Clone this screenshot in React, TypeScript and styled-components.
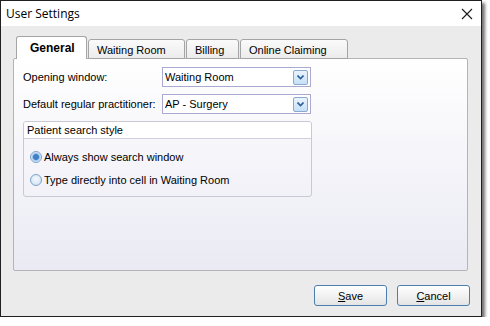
import { FC } from "react";
import styled, { createGlobalStyle } from "styled-components";

const GlobalStyle = createGlobalStyle`
  html, body {
    margin: 0;
    padding: 0;
    background: #ffffff;
  }
  body {
    font-family: Tahoma, "Liberation Sans", Arial, sans-serif;
    font-size: 11px;
    color: #000;
  }
`;

const TABS = ["General", "Waiting Room", "Billing", "Online Claiming"];
const TAB_WIDTHS = [71, 97, 53, 108];

const Chevron: FC = () => (
  <svg width="7" height="5" viewBox="0 0 7 5">
    <path d="M0.5 0.5 L3.5 3.5 L6.5 0.5" fill="none" stroke="#2d5f9a" strokeWidth="1.6" />
  </svg>
);

const App: FC = () => {
  return (
    <>
      <GlobalStyle />
      <SWindow>
        <STitleBar>
          <span>User Settings</span>
          <SClose aria-label="close">
            <svg width="12" height="12" viewBox="0 0 12 12">
              <path d="M1 1 L11 11 M11 1 L1 11" stroke="#1a1a1a" strokeWidth="1.1" />
            </svg>
          </SClose>
        </STitleBar>

        <SBody>
          <STabRow>
            {TABS.map((t, i) => (
              <STab key={t} $active={i === 0} $w={TAB_WIDTHS[i]}>
                {t}
              </STab>
            ))}
          </STabRow>

          <SPanel>
            <SFieldRow>
              <SLabel>Opening window:</SLabel>
              <SSelect>
                <span>Waiting Room</span>
                <SDropButton>
                  <Chevron />
                </SDropButton>
              </SSelect>
            </SFieldRow>
            <SFieldRow>
              <SLabel>Default regular practitioner:</SLabel>
              <SSelect>
                <span>AP - Surgery</span>
                <SDropButton>
                  <Chevron />
                </SDropButton>
              </SSelect>
            </SFieldRow>

            <SGroup>
              <SGroupHeader>Patient search style</SGroupHeader>
              <SGroupBody>
                <SRadioRow>
                  <SRadio $checked />
                  Always show search window
                </SRadioRow>
                <SRadioRow>
                  <SRadio />
                  Type directly into cell in Waiting Room
                </SRadioRow>
              </SGroupBody>
            </SGroup>
          </SPanel>

          <SFooter>
            <SButton>
              <u>S</u>ave
            </SButton>
            <SButton>
              <u>C</u>ancel
            </SButton>
          </SFooter>
        </SBody>
      </SWindow>
    </>
  );
};

const SWindow = styled.div`
  width: 482px;
  height: 317px;
  box-sizing: border-box;
  border: 1px solid #202020;
  background: #ebebeb;
  box-shadow: 3px 3px 3px rgba(0, 0, 0, 0.55);
  display: flex;
  flex-direction: column;
`;

const STitleBar = styled.div`
  height: 25px;
  flex-shrink: 0;
  background: #ffffff;
  display: flex;
  align-items: center;
  justify-content: space-between;
  padding: 0 0 0 5px;
  font-family: "Segoe UI", "Open Sans", "Liberation Sans", sans-serif;
  font-size: 12px;
  color: #000;
`;

const SClose = styled.div`
  width: 20px;
  display: flex;
  justify-content: center;
  align-items: center;
  margin-right: 4px;
`;

const SBody = styled.div`
  flex: 1;
  display: flex;
  flex-direction: column;
  padding: 11px 13px 0 12px;
`;

const STabRow = styled.div`
  display: flex;
  align-items: flex-end;
  height: 22px;
  padding-left: 3px;
  position: relative;
  z-index: 1;
  margin-bottom: -1px;
`;

const STab = styled.div<{ $active?: boolean; $w: number }>`
  box-sizing: border-box;
  width: ${(p) => p.$w}px;
  height: ${(p) => (p.$active ? 23 : 20)}px;
  margin-right: 1px;
  border: 1px solid #a4a4a4;
  border-bottom: ${(p) => (p.$active ? "none" : "1px solid #a4a4a4")};
  border-radius: 3px 3px 0 0;
  background: ${(p) =>
    p.$active ? "#ffffff" : "linear-gradient(#fafafa, #ececec)"};
  font-weight: ${(p) => (p.$active ? "bold" : "normal")};
  font-size: ${(p) => (p.$active ? "12px" : "11px")};
  display: flex;
  align-items: center;
  padding-left: ${(p) => (p.$active ? 13 : 8)}px;
  padding-top: ${(p) => (p.$active ? 0 : 1)}px;
`;

const SPanel = styled.div`
  height: 213px;
  box-sizing: border-box;
  border: 1px solid #b4b4b4;
  border-radius: 2px;
  background: linear-gradient(#ffffff, #eaeaf4);
  padding: 8px 0 0 9px;
`;

const SFieldRow = styled.div`
  display: flex;
  align-items: center;
  height: 20px;
  margin-bottom: 7px;
`;

const SLabel = styled.div`
  width: 139px;
  white-space: nowrap;
`;

const SSelect = styled.div`
  box-sizing: border-box;
  width: 149px;
  height: 20px;
  border: 1px solid #a9a9d2;
  background: #ffffff;
  display: flex;
  align-items: center;
  justify-content: space-between;
  padding: 0 2px 0 2px;
  & > span {
    font-size: 11px;
  }
`;

const SDropButton = styled.div`
  box-sizing: border-box;
  width: 15px;
  height: 15px;
  border: 1px solid #8ba9cf;
  border-radius: 2px;
  background: linear-gradient(#eaf4fd, #c6e0f7);
  display: flex;
  align-items: center;
  justify-content: center;
`;

const SGroup = styled.div`
  box-sizing: border-box;
  width: 289px;
  height: 76px;
  margin-top: 2px;
  border: 1px solid #c9c9d6;
  border-radius: 3px;
  overflow: hidden;
`;

const SGroupHeader = styled.div`
  height: 16px;
  background: #ffffff;
  border-bottom: 1px solid #cfcfdc;
  display: flex;
  align-items: center;
  padding-left: 3px;
  font-size: 11px;
`;

const SGroupBody = styled.div`
  padding: 11px 0 0 6px;
  display: flex;
  flex-direction: column;
  gap: 9px;
`;

const SRadioRow = styled.label`
  display: flex;
  align-items: center;
  gap: 2px;
  height: 14px;
`;

const SRadio = styled.span<{ $checked?: boolean }>`
  box-sizing: border-box;
  width: 12px;
  height: 12px;
  border-radius: 50%;
  border: 1px solid #7ea1c9;
  background: ${(p) =>
    p.$checked
      ? "radial-gradient(circle, #3f7fc7 0 2.5px, #9cc3ea 3.5px, #e3effb 5px)"
      : "radial-gradient(circle at 50% 40%, #f4f9fe, #c9def3)"};
`;

const SFooter = styled.div`
  flex: 1;
  display: flex;
  justify-content: flex-end;
  align-items: flex-start;
  gap: 10px;
  padding-top: 14px;
  margin-right: -2px;
`;

const SButton = styled.button`
  box-sizing: border-box;
  width: 73px;
  height: 21px;
  border: 1px solid #4a7fb0;
  border-radius: 3px;
  background: linear-gradient(#ffffff 0%, #f2f2f2 50%, #e4e4e4 100%);
  font-family: Tahoma, "Liberation Sans", Arial, sans-serif;
  font-size: 11px;
  color: #000;
  padding: 0;
  & > u {
    text-decoration: underline;
  }
`;

export default App;
